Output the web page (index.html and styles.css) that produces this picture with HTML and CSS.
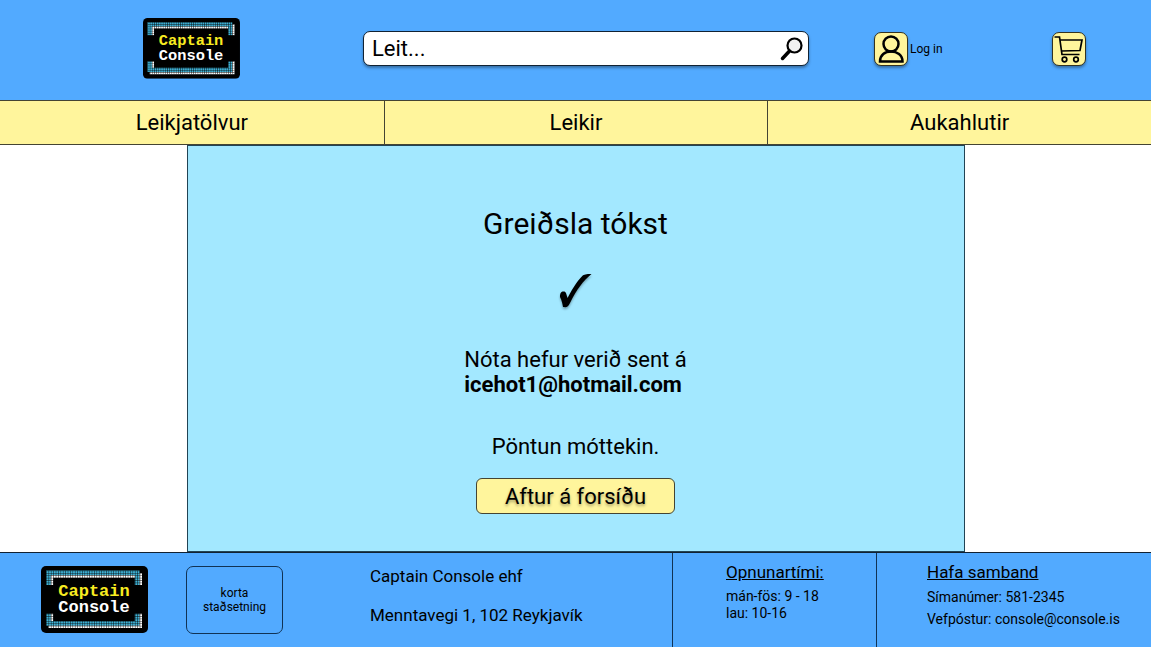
FILE: index.html
```html
<!DOCTYPE html>
<html lang="is">
<head>
<meta charset="utf-8">
<meta name="viewport" content="width=device-width, initial-scale=1">
<title>Captain Console</title>
<link rel="stylesheet" href="styles.css">
</head>
<body>
<svg class="defs" width="0" height="0" aria-hidden="true">
  <defs>
    <pattern id="grid" width="1" height="1" patternUnits="userSpaceOnUse">
      <path d="M0 0H1V.18H.18V1H0Z" fill="#000"/>
    </pattern>
    <symbol id="logo-art" viewBox="0 0 107 67">
      <rect width="107" height="67" rx="5"/>
      <g transform="translate(5 4.5) scale(2.4)">
        <path fill="#3fb2d6" d="M0 0H39V6H37V2H2V6H0ZM0 18H2V21H37V18H39V23H0Z"/>
        <path fill="#fff" d="M2 6V2H37V3H3V6ZM39 1H40V6H39ZM2 18H3V21H2ZM39 18H40V24H1V23H39Z"/>
        <rect width="40" height="24" fill="url(#grid)"/>
      </g>
    </symbol>
  </defs>
</svg>

<header class="header">
  <a class="logo" href="#">
    <svg viewBox="0 0 107 67" role="img" aria-label="Captain Console">
      <use href="#logo-art" width="107" height="67"/>
      <text class="logo-name" x="53" y="30">Captain</text>
      <text class="logo-kind" x="53" y="46">Console</text>
    </svg>
  </a>
  <form class="search" role="search">
    <input class="search-input" type="text" placeholder="Leit..." aria-label="Leit">
    <button class="search-button" type="button" aria-label="Leita">
      <svg viewBox="0 0 24 24" width="24" height="24" fill="none" stroke="#000">
        <circle cx="14.500" cy="8.500" r="7" stroke-width="2.200" fill="#f2f2f2"/>
        <path d="M9.500 14L2.500 21.500" stroke-width="3.500" stroke-linecap="round"/>
      </svg>
    </button>
  </form>
  <div class="actions">
    <a class="login" href="#">
      <span class="tile">
        <svg viewBox="0 0 32 32" width="32" height="32" fill="none" stroke="#000" stroke-width="2.500">
          <circle cx="16" cy="11" r="7.500"/>
          <path d="M5 28.500C5 22 10 18.500 16 18.500S27.500 22 27.500 28.500Z"/>
        </svg>
      </span>
      Log in
    </a>
    <a class="tile cart" href="#" aria-label="Karfa">
      <svg viewBox="0 0 32 32" width="32" height="32" fill="none" stroke="#000" stroke-width="1.700">
        <path d="M1.500 4H6.500L9 21.500H26.500M7 7H29L27 17.500L8.500 18"/>
        <circle cx="11.500" cy="26.500" r="2.300"/>
        <circle cx="23" cy="26.500" r="2.300"/>
      </svg>
    </a>
  </div>
</header>

<nav class="nav">
  <a href="#">Leikjatölvur</a>
  <a href="#">Leikir</a>
  <a href="#">Aukahlutir</a>
</nav>

<main class="panel">
  <h1 class="title">Greiðsla tókst</h1>
  <svg class="check" viewBox="0 0 32 34" width="32" height="34" aria-hidden="true">
    <path d="M0 23C0 19 1 17.500 3.500 17.500C6 17.500 6 19 7.500 24C14 12 19 5 22.500 1.800C24 .5 26 0 31.500 0C23 7 17 15 10 29C8 33 7 33.500 3 33C2.500 30 2 27 0 23Z"/>
  </svg>
  <p class="receipt">Nóta hefur verið sent á<br><strong>icehot1@hotmail.com</strong></p>
  <p class="received">Pöntun móttekin.</p>
  <button class="home-button" type="button">Aftur á forsíðu</button>
</main>

<footer class="footer">
  <section class="company">
    <a class="footer-logo" href="#">
      <svg viewBox="0 0 107 67" role="img" aria-label="Captain Console">
        <use href="#logo-art" width="107" height="67"/>
        <text class="logo-name" x="53" y="30">Captain</text>
        <text class="logo-kind" x="53" y="46">Console</text>
      </svg>
    </a>
    <div class="map">korta<br>staðsetning</div>
    <address class="address">
      <p>Captain Console ehf</p>
      <p>Menntavegi 1, 102 Reykjavík</p>
    </address>
  </section>
  <section class="hours">
    <h2>Opnunartími:</h2>
    <p>mán-fös: 9 - 18<br>lau: 10-16</p>
  </section>
  <section class="contact">
    <h2>Hafa samband</h2>
    <p>Símanúmer: 581-2345</p>
    <p>Vefpóstur: console@console.is</p>
  </section>
</footer>
</body>
</html>
```
FILE: styles.css
```css
* { box-sizing: border-box; }

body {
  margin: 0;
  min-height: 100vh;
  display: flex;
  flex-direction: column;
  background: #fff;
  color: #000;
  font-family: Roboto, "Liberation Sans", sans-serif;
}

a { color: inherit; text-decoration: none; }
h1, h2, p { margin: 0; font-weight: 400; }
svg { display: block; }
.defs { position: absolute; }

.header {
  display: grid;
  grid-template-columns: 363fr 446fr 342fr;
  align-items: center;
  height: 100px;
  padding-bottom: 3px;
  background: #52aaff;
}
.logo { width: 97px; justify-self: center; margin-left: 20px; }
.logo-name, .logo-kind {
  font-family: "Liberation Mono", monospace;
  font-weight: 700;
  font-size: 17px;
  text-anchor: middle;
}
.logo-name { fill: #f8ec20; }
.logo-kind { fill: #fff; }

.search {
  display: flex;
  align-items: center;
  height: 35px;
  padding: 0 4px 0 8px;
  background: #fff;
  border: 1px solid #123;
  border-radius: 7px;
  box-shadow: 0 2px 3px rgba(0, 0, 0, .35);
}
.search-input {
  flex: 1;
  min-width: 0;
  padding: 0;
  border: 0;
  outline: 0;
  background: none;
  font: inherit;
  font-size: 22px;
}
.search-input::placeholder { color: #000; opacity: 1; }
.search-button { padding: 0; border: 0; background: none; }

.actions {
  display: flex;
  justify-content: space-between;
  align-items: center;
  padding: 0 65px;
}
.login { display: flex; align-items: center; gap: 2px; font-size: 12px; }
.tile {
  display: block;
  width: 34px;
  height: 34px;
  background: #fff59c;
  border: 1px solid #332;
  border-radius: 7px;
  box-shadow: 0 2px 3px rgba(0, 0, 0, .35);
}

.nav {
  display: grid;
  grid-template-columns: repeat(3, 1fr);
  height: 45px;
  background: #fff59c;
  border: solid #443;
  border-width: 1px 0;
  font-size: 22px;
}
.nav a { display: flex; align-items: center; justify-content: center; }
.nav a + a { border-left: 1px solid #443; }

.panel {
  flex: 1;
  display: flex;
  flex-direction: column;
  align-items: center;
  width: 68%;
  max-width: 778px;
  margin: 0 auto;
  padding: 60px 0 36px;
  background: #a3e8ff;
  border: 1px solid #245;
  font-size: 22px;
  line-height: 25px;
}
.title { font-size: 30px; line-height: 36px; }
.check { margin: 32px 0 39px; filter: drop-shadow(0 2px 1px rgba(0, 0, 0, .3)); }
.received { margin: 37px 0 19px; }
.home-button {
  width: 199px;
  height: 36px;
  padding: 0;
  border: 1px solid #443;
  border-radius: 6px;
  background: #fff59c;
  color: #000;
  font: inherit;
  text-shadow: 0 2px 3px rgba(0, 0, 0, .35);
}

.footer {
  display: grid;
  grid-template-columns: 672fr 204fr 275fr;
  min-height: 95px;
  background: #52aaff;
  border-top: 1px solid #123;
}
.company { display: flex; align-items: flex-start; padding: 13px 0 13px 41px; }
.footer-logo { width: 107px; }
.map {
  display: flex;
  align-items: center;
  justify-content: center;
  width: 97px;
  height: 68px;
  margin: 0 87px 0 38px;
  border: 1px solid #135;
  border-radius: 7px;
  font-size: 12px;
  line-height: 14px;
  text-align: center;
}
.address {
  display: grid;
  gap: 19px;
  font-style: normal;
  font-size: 17px;
  line-height: 20px;
}
.hours, .contact {
  padding-top: 9px;
  border-left: 1px solid #135;
  font-size: 14px;
}
.hours { padding-left: 53px; }
.contact { padding-left: 50px; }
.footer h2 { font-size: 17px; line-height: 20px; text-decoration: underline; }
.hours p { margin-top: 6px; line-height: 17px; }
.contact p { margin-top: 4px; line-height: 18px; }
.contact h2 + p { margin-top: 6px; }
```
